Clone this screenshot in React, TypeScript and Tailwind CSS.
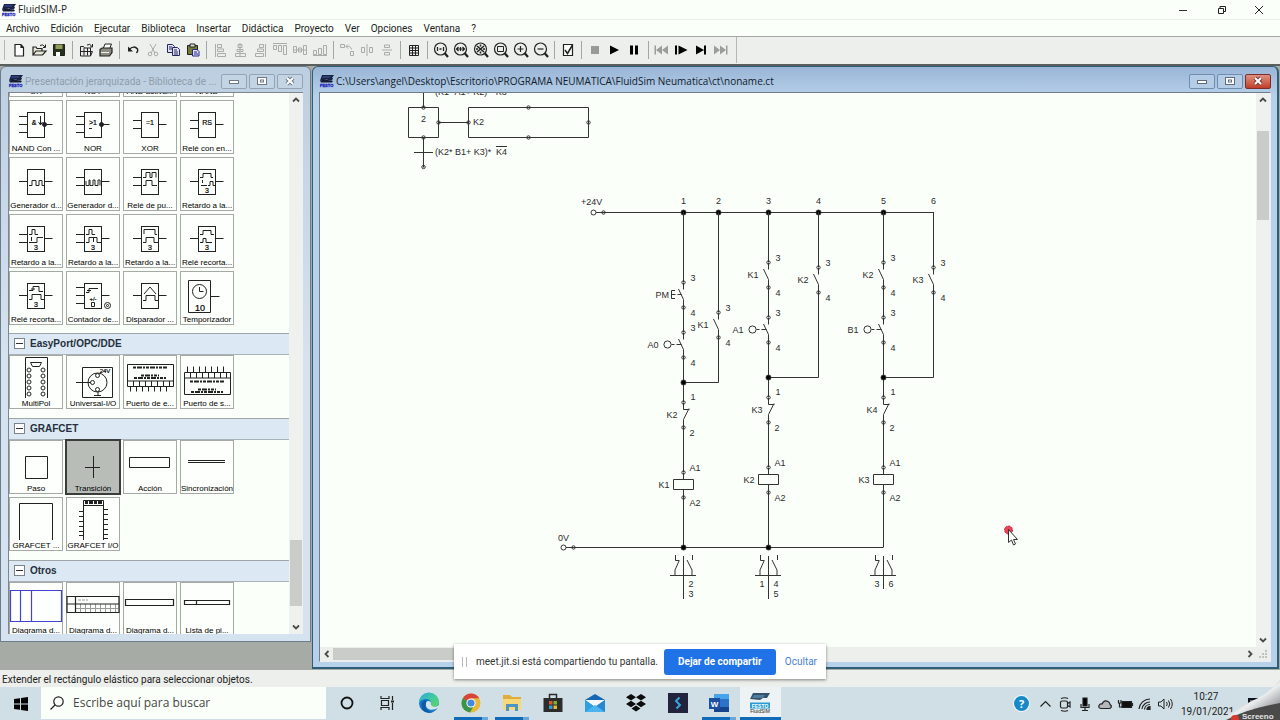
import type { ReactNode } from "react";

const ink = "#222";

/* ---------- shared pieces ---------- */

function FestoIcon() {
  return (
    <svg width="16" height="16" viewBox="0 0 16 16" className="shrink-0" aria-hidden="true">
      <path d="M3 2h12l-2 3h1l-1 2.500H10l-2-1-7 1z" fill="#1c2340" />
      <path d="M4 3h8l-2 2H3z" fill="#2c3f7c" />
      <path d="M1 7.500l5-1 8 1.500-1 1.500H2z" fill="#161c36" />
      <text x="1" y="14" fontSize="4" fontWeight="bold" fill="#2424b8" stroke="#2424b8" strokeWidth=".3" fontFamily="Liberation Sans, sans-serif">FESTO</text>
    </svg>
  );
}

function Ico({ children, color = ink }: { children: ReactNode; color?: string }) {
  return (
    <svg width="20" height="20" viewBox="0 0 20 20" fill="none" stroke={color} strokeWidth="1" aria-hidden="true">
      {children}
    </svg>
  );
}

/* ---------- toolbar ---------- */

const dim = "#a9ada8";
const Mag = ({ children }: { children: ReactNode }) => (
  <Ico>
    <circle cx="9.500" cy="9" r="6" strokeWidth="1.200" />
    <path d="M13.500 13l3.500 4" strokeWidth="2.200" />
    {children}
  </Ico>
);

const toolGroups: { label: string; icon: ReactNode }[][] = [
  [
    { label: "Nuevo", icon: <Ico><path d="M6 4.500h6l2.500 3v8.500H6zM12 4.500v3h2.500" fill="#fff" strokeWidth="1.200" /></Ico> },
    { label: "Abrir", icon: <Ico><path d="M4 15V7h3l1 1.500h5V11M4 15l3-4h10l-3.500 4z" fill="#e8e8d8" strokeWidth="1.200" /><path d="M11 5.500q3-2 5 1.500M16.500 4.500V7.500H14" /></Ico> },
    { label: "Guardar", icon: <Ico><path d="M4.500 4.500h11v11h-11z" fill="#26301c" stroke="#1c2414" /><path d="M6.500 4.500h7V9h-7z" fill="#8f9c5a" stroke="none" /><path d="M7 12h4v4H7z" fill="#fff" stroke="none" /></Ico> },
  ],
  [
    { label: "Abrir biblioteca", icon: <Ico><path d="M4.500 6.500h3l1 1.500h6v8h-10z" fill="#eee" /><path d="M8 8v7.500M11.500 8v7.500M4.500 11.500h12l-2 4.500M11 5q3-2 5 1.500M16.500 4V7H14" /></Ico> },
    { label: "Imprimir", icon: <Ico><path d="M7 9l2-5h6.500l-2 5" fill="#fff" /><path d="M4 9.500L6 8h10v4.500L13.500 16H4z" fill="#8c8c80" strokeWidth="1.200" /><path d="M5 12.500h8" stroke="#eee" /></Ico> },
  ],
  [
    { label: "Deshacer", icon: <Ico><path d="M6 9.500q5-4.500 8.500-.5 1 2-1 4" strokeWidth="1.500" /><path d="M5 6.500v5h5z" fill={ink} stroke="none" /></Ico> },
    { label: "Cortar", icon: <Ico color={dim}><path d="M7 4l5 9M13 4l-5 9" /><circle cx="7" cy="14" r="1.800" /><circle cx="13" cy="14" r="1.800" /></Ico> },
    { label: "Copiar", icon: <Ico color="#26265c"><path d="M4.500 4.500h5l2 2v6h-7z" fill="#dfe2f4" /><path d="M9.500 7.500h5l2 2v6h-7z" fill="#dfe2f4" /><path d="M6 7h3M6 9h3M11 10h3M11 12h4M11 14h4" /></Ico> },
    { label: "Pegar", icon: <Ico><path d="M4.500 5.500h10v9h-10z" fill="#767a38" /><path d="M7 4h5v3H7z" fill="#ddd" /><path d="M9.500 9.500h4.500l2 2v4.500H9.500z" fill="#dfe2f4" stroke="#26268c" /><path d="M11 12h3M11 14h4" stroke="#26268c" /></Ico> },
  ],
  [
    { label: "Alinear izquierda", icon: <Ico color={dim}><path d="M5.500 4v13M7.500 4.500h4v3h-4zM7.500 9h6v2.500h-6zM7.500 13.500h8v3h-8z" /></Ico> },
    { label: "Centrar horizontal", icon: <Ico color={dim}><path d="M8 4.500h4v3H8zM7 9.500h6v2H7zM5.500 13.500h10v3h-10zM10 3v14" /></Ico> },
    { label: "Alinear derecha", icon: <Ico color={dim}><path d="M15.500 4v13M9.500 4.500h4v3h-4zM7.500 9h6v2.500h-6zM5.500 13.500h8v3h-8z" /></Ico> },
    { label: "Alinear arriba", icon: <Ico color={dim}><path d="M3 3.500h14M3.500 5.500h3v4h-3zM8.500 5.500h3v6h-3zM13.500 5.500h3v9h-3z" /></Ico> },
    { label: "Centrar vertical", icon: <Ico color={dim}><path d="M3.500 6.500h3v6h-3zM8.500 8h3v4h-3zM13.500 5.500h3v9h-3zM3 10h14" /></Ico> },
    { label: "Alinear abajo", icon: <Ico color={dim}><path d="M3 15.500h14M3.500 10.500h3v4h-3zM8.500 8.500h3v6h-3zM13.500 5.500h3v9h-3z" /></Ico> },
  ],
  [
    { label: "Girar", icon: <Ico color={dim}><path d="M3.500 4.500h4v3h-4zM13.500 11.500h3v4h-3zM9 6.500q5-1 5.500 3M11 4.500l-2 2 2 2" /></Ico> },
    { label: "Reflejar horizontal", icon: <Ico color={dim}><path d="M10 4v12M4.500 7.500h3v5h-3zM12.500 7.500h3v5h-3z" /></Ico> },
    { label: "Reflejar vertical", icon: <Ico color={dim}><path d="M5 10h10M7.500 5h5v2.500h-5zM7.500 12.500h5V15h-5z" /></Ico> },
  ],
  [{ label: "Retícula", icon: <Ico><path d="M5.500 5.500h9v10h-9zM5.500 8h9M5.500 10.500h9M5.500 13h9M8.500 5.500v10M11.500 5.500v10" /></Ico> }],
  [
    { label: "Tamaño original", icon: <Mag><path d="M6.500 7v4M12.500 7v4M8.500 9h2" strokeWidth="1.300" /></Mag> },
    { label: "Zoom anterior", icon: <Mag><path d="M5 9h9M7.500 7l-2 2 2 2M11.500 7l2 2-2 2M9.500 7v4" strokeWidth="1.200" /></Mag> },
    { label: "Ver todo", icon: <Mag><path d="M6 6l7 6M13 6l-7 6M5 9h2M12 9h2M9.500 4.500v2M9.500 11.500v2" strokeWidth="1.600" /></Mag> },
    { label: "Ver sección", icon: <Mag><path d="M6.500 6.500h6v5h-6z" /></Mag> },
    { label: "Acercar", icon: <Mag><path d="M6.500 9h6M9.500 6v6" strokeWidth="1.200" /></Mag> },
    { label: "Alejar", icon: <Mag><path d="M6.500 9h6" strokeWidth="1.200" /></Mag> },
  ],
  [{ label: "Verificar", icon: <Ico><path d="M5.500 4.500h9v11h-9z" fill="#fff" strokeWidth="1.200" /><path d="M7 10l2.500 3.500 5-8.500" strokeWidth="1.500" /></Ico> }],
  [
    { label: "Parar", icon: <Ico color="none"><path d="M6 6h8v8H6z" fill="#979b96" /></Ico> },
    { label: "Iniciar", icon: <Ico color="none"><path d="M5 5.500v9l9-4.500z" fill="#000" /></Ico> },
    { label: "Pausa", icon: <Ico color="none"><path d="M5 5.500h3v9H5zM10 5.500h3v9h-3z" fill="#000" /></Ico> },
  ],
  [
    { label: "Reiniciar", icon: <Ico color="none"><path d="M2.500 5.500H4v9H2.500zM10 5.500v9L4 10zM16 5.500v9L10 10z" fill="#9a9e99" /></Ico> },
    { label: "Paso a paso", icon: <Ico color="none"><path d="M3 5.500h2v9H3zM6.500 5.500v9l9-4.500z" fill="#000" /></Ico> },
    { label: "Simular hasta cambio", icon: <Ico color="none"><path d="M4 5.500v9l8-4.500zM12 5.500h2v9h-2z" fill="#000" /></Ico> },
    { label: "Tema siguiente", icon: <Ico color="none"><path d="M2 5.500v9L8 10zM8 5.500v9l6-4.500zM14 5.500h1.500v9H14z" fill="#9a9e99" /></Ico> },
  ],
];

function Toolbar() {
  return (
    <div className="flex h-7 shrink-0 items-center border-t border-[#a3a7a2] bg-[#ecefeb] pb-px pl-1">
      <span className="h-5 w-[5px] border-l border-[#b4b8b3]" />
      {toolGroups.map((group, g) => (
        <div key={g} className="flex items-center">
          {group.map((t) => (
            <button key={t.label} aria-label={t.label} className="flex size-5 items-center justify-center">
              {t.icon}
            </button>
          ))}
          {g < toolGroups.length - 1 ? <span className="mx-[3px] h-[18px] w-px bg-[#a3a7a2]" /> : <span className="ml-1 h-[26px] w-px bg-[#b4b8b3]" />}
        </div>
      ))}
    </div>
  );
}

/* ---------- component library ---------- */

function Gate({ left, right = [24], children }: { left: number[]; right?: number[]; children?: ReactNode }) {
  return (
    <>
      <rect x="18.500" y="12.500" width="17" height="25" />
      {left.map((y) => <path key={y} d={`M10 ${y + 0.5}h8.500`} />)}
      {right.map((y) => <path key={y} d={`M35.500 ${y + 0.5}h8`} />)}
      {children}
    </>
  );
}

function T({ x, y, s = 7, children }: { x: number; y: number; s?: number; children: ReactNode }) {
  return <text x={x} y={y} fontSize={s} textAnchor="middle" fill="#000" stroke="#000" strokeWidth=".2">{children}</text>;
}

type Item = { name: string; art: ReactNode; selected?: boolean };

const Block = () => <Gate left={[16, 32]} />;
const logic: Item[] = [
  { name: "OR", art: <Block /> },
  { name: "NOT", art: <Block /> },
  { name: "AND activa...", art: <Block /> },
  { name: "NAND", art: <Block /> },
  { name: "NAND Con ...", art: <Gate left={[16, 24, 32]}><T x={25} y={25}>&amp;</T><path d="M31.500 16v9M29.500 22l2 3 2-3" /><circle cx="35.500" cy="24.500" r="2" fill={ink} /></Gate> },
  { name: "NOR", art: <Gate left={[16, 24, 32]}><T x={27} y={25}>&gt;1</T><path d="M23 28.500h3" /><circle cx="35.500" cy="24.500" r="2" fill={ink} /></Gate> },
  { name: "XOR", art: <Gate left={[20, 28]}><T x={27} y={25}>=1</T></Gate> },
  { name: "Relé con en...", art: <Gate left={[20, 28]}><T x={27} y={25}>RS</T></Gate> },
  { name: "Generador d...", art: <Gate left={[24]}><path d="M20 28.500h3v-5h4v5h3v-5h3v5h2" /></Gate> },
  { name: "Generador d...", art: <Gate left={[20, 28]}><path d="M20 24v4.500h3V23h1v5.500h3V23h2v5.500h3V23h2v5.500" /></Gate> },
  { name: "Relé de pu...", art: <Gate left={[20, 28]}><path d="M20 20.500h3v-5h4v5h2v-5h4v5M20 28.500h3v-5h6v5h5" /></Gate> },
  { name: "Retardo a la...", art: <Gate left={[24]}><path d="M20 20.500h3v-4h8v4h2M22.500 23v3M21 28.500h6M28 28.500h2v-4h3v4h2" /><T x={27} y={36}>3</T></Gate> },
  { name: "Retardo a la...", art: <Gate left={[20, 28]}><path d="M20 20.500h3v-5h3v5h3M22.500 23v4M20 28.500h8v-5h6" /><T x={27} y={36}>3</T></Gate> },
  { name: "Retardo a la...", art: <Gate left={[20, 28]}><path d="M20 20.500h3v-5h3v5h3M20 28.500h3v-5h8v5h4M27.500 24v4" /><T x={27} y={36}>3</T></Gate> },
  { name: "Retardo a la...", art: <Gate left={[24]}><path d="M21 20v-4.500h11v5h2M20 28.500h3v-5h8v5h4" /><T x={27} y={36}>3</T></Gate> },
  { name: "Relé recorta...", art: <Gate left={[24]}><path d="M20 20.500h3v-4h8v4h3M20 28.500h3v-4h3v4h6" /><T x={27} y={36}>3</T></Gate> },
  { name: "Relé recorta...", art: <Gate left={[24]}><path d="M20 19.500h4v-4h6v5h4M20 28.500h3v-5h9v5h3M22 18h4" /><T x={27} y={36}>3</T></Gate> },
  { name: "Contador de...", art: <Gate left={[16, 24, 32]}><path d="M20 21.500h3v-4h9M21 19.500h4" /><T x={27} y={30} s={6}>+/-</T><path d="M25.500 31.500h3v4h-3z" /><circle cx="41.500" cy="34.500" r="3" /><circle cx="41.500" cy="34.500" r="1" /></Gate> },
  { name: "Disparador ...", art: <Gate left={[24]}><path d="M21 23l6-7 6 7M20 29.500h3v-5h9v5h3" /></Gate> },
  { name: "Temporizador", art: <><path d="M8.500 9.500h22v32h-22zM30.500 25.500h9" /><circle cx="19.500" cy="20.500" r="7" /><path d="M19.500 16v4.500h4" /><T x={20} y={40} s={9}>10</T></> },
];

const pinRows = [15, 21, 27, 33, 39];
const ports: Item[] = [
  { name: "MultiPol", art: <><path d="M16.500 43V2.500h22V43M21.500 7.500h11l-2 4h-7z" />{pinRows.map((y) => <g key={y}><circle cx="20" cy={y} r="2" /><circle cx="34" cy={y} r="2" /></g>)}</> },
  { name: "Universal-I/O", art: <><path d="M16.500 12.500h30v30h-30zM10 27.500h15M32 37v4M28 40.500h7" /><circle cx="31.500" cy="27.500" r="9.500" /><circle cx="26.500" cy="27.500" r="2" /><circle cx="31.500" cy="20.500" r="2" /><circle cx="31.500" cy="34.500" r="2" /><T x={39} y={18} s={6}>24V</T></> },
  { name: "Puerto de e...", art: <><path d="M4.500 9.500h46v22h-46zM4.500 26h46M7.500 31.500v5M13.500 31.500v5M19.500 31.500v5M25.500 31.500v5M31.500 31.500v5M37.500 31.500v5M43.500 31.500v5M10.500 26v5M16.500 26v5M22.500 26v5M28.500 26v5M34.500 26v5M40.500 26v5M46.500 26v5" /><path d="M10 12.500h34M18 20.500h18M11 23h32" strokeWidth="1.800" strokeDasharray="3 1 5 1 2 1" /></> },
  { name: "Puerto de s...", art: <><path d="M4.500 17.500h46v22h-46zM4.500 23h46M7.500 17.500v-6M13.500 17.500v-6M19.500 17.500v-6M25.500 17.500v-6M31.500 17.500v-6M37.500 17.500v-6M43.500 17.500v-6M10.500 18v5M16.500 18v5M22.500 18v5M28.500 18v5M34.500 18v5M40.500 18v5M46.500 18v5" /><path d="M10 26.500h34M18 34.500h18M11 37h32" strokeWidth="1.800" strokeDasharray="3 1 5 1 2 1" /></> },
];

const grafcet: Item[] = [
  { name: "Paso", art: <path d="M16.500 16.500h22v22h-22z" /> },
  { name: "Transición", selected: true, art: <path d="M27.500 16v22M19 27.500h15" /> },
  { name: "Acción", art: <path d="M6.500 17.500h40v10h-40z" /> },
  { name: "Sincronización", art: <path d="M8 20.500h37M8 22.500h37" /> },
  { name: "GRAFCET ...", art: <path d="M10.500 43V6.500h33V43" /> },
  { name: "GRAFCET I/O", art: <><path d="M17.500 43V3.500h20V43M17.500 8.500h20M13 14.500h4M13 19.500h4M13 24.500h4M13 29.500h4M13 34.500h4M13 38.500h4M37 12.500h5M37 17.500h5M37 22.500h5M37 27.500h5M37 32.500h5M37 37.500h5M37 41.500h5" /><path d="M19 5.500h17" strokeWidth="3" strokeDasharray="3 1 4 1" /></> },
];

const others: Item[] = [
  { name: "Diagrama d...", art: <path d="M1.500 8.500h51v31h-51zM11.500 8.500v31M22.500 8.500v31" stroke="#4343d0" strokeWidth="1.200" /> },
  { name: "Diagrama d...", art: <><path d="M9 26.500h43M14.500 22v8M19.500 22v8M24.500 22v8M29.500 22v8M34.500 22v8M39.500 22v8M44.500 22v8M49.500 22v8" stroke="#9a9a9a" /><path d="M1 14.500h52v16H1zM1 22h52M9.500 14.500v16" strokeWidth="1.200" /><path d="M12 18h10" stroke="#999" strokeDasharray="3 1" /></> },
  { name: "Diagrama d...", art: <path d="M2.500 17.500h48v6h-48z" strokeWidth="1.200" /> },
  { name: "Lista de pi...", art: <path d="M4.500 18.500h45v4h-45zM16.500 18.500v4" strokeWidth="1.200" /> },
];

function Tiles({ items }: { items: Item[] }) {
  return (
    <div className="grid grid-cols-[repeat(4,54px)] gap-[3px]">
      {items.map((it, i) => (
        <button
          key={i}
          className={
            it.selected
              ? "relative h-[54px] border border-[#3b3d3a] bg-[#b9bdb8] outline outline-[#3b3d3a]"
              : "relative h-[54px] border border-[#a6aaa5] bg-[#fcfffb]"
          }
        >
          <svg viewBox="0 0 54 54" className="absolute -inset-px size-[54px]" fill="none" stroke={ink} fontFamily="Liberation Sans, sans-serif" aria-hidden="true">
            {it.art}
          </svg>
          <span className="absolute inset-x-0 bottom-0 text-center font-['Liberation_Sans',sans-serif] text-[8px] leading-[9px] whitespace-nowrap text-black">
            {it.name}
          </span>
        </button>
      ))}
    </div>
  );
}

function SectionHeader({ title }: { title: string }) {
  return (
    <button className="flex h-[22px] w-full items-center gap-[5px] border-y border-t-[#a0a6a8] border-b-[#a9b2b8] bg-[#dce9f4] pb-px pl-[5px]">
      <span className="flex size-[11px] items-center justify-center border border-[#7b8288] bg-white">
        <span className="h-px w-[7px] bg-[#333]" />
      </span>
      <span className="font-['Liberation_Sans',sans-serif] text-[10px] leading-3 font-bold text-[#26303c]">{title}</span>
    </button>
  );
}

/* ---------- window chrome ---------- */

function Chevron({ d }: { d: string }) {
  return (
    <svg width="8" height="8" viewBox="0 0 8 8" fill="none" stroke="#4a4c4a" strokeWidth="1.800" aria-hidden="true">
      <path d={d} />
    </svg>
  );
}
const up = "M1 5.500l3-3 3 3";
const down = "M1 2.500l3 3 3-3";
const leftward = "M5.500 1l-3 3 3 3";
const rightward = "M2.500 1l3 3-3 3";

function ChildTitle({ title, active }: { title: string; active?: boolean }) {
  const base = "flex h-[15px] w-[26px] items-center justify-center rounded-[2px] border";
  const tone = active ? "border-[#6f8db0] bg-[#b4cce6]" : "border-[#93a4b6] bg-[#c3d4e4]";
  const glyph = active ? "#5d6b7c" : "#707a85";
  return (
    <div className="flex h-[25px] shrink-0 items-center gap-px pt-[3px]">
      <FestoIcon />
      <h2
        className={
          active
            ? "min-w-0 flex-1 truncate text-[10px] text-[#111c2c]"
            : "min-w-0 flex-1 truncate font-[Roboto,sans-serif] text-[10px] text-[#8f9dac]"
        }
      >
        {title}
      </h2>
      <div className="flex gap-[2px]">
        <button aria-label="Minimizar" className={`${base} ${tone}`}>
          <svg width="12" height="10" viewBox="0 0 12 10"><rect x="1.500" y="4.500" width="9" height="3" fill="#fff" stroke={glyph} /></svg>
        </button>
        <button aria-label="Maximizar" className={`${base} ${tone}`}>
          <svg width="12" height="10" viewBox="0 0 12 10"><rect x="1.500" y="1.500" width="9" height="7" fill="#fff" stroke={glyph} /><rect x="4.500" y="4" width="3" height="2" fill="#fff" stroke={glyph} /></svg>
        </button>
        <button aria-label="Cerrar" className={`${base} ${active ? "border-[#7c2f28] bg-linear-to-b from-[#dd9082] to-[#c03d28]" : tone}`}>
          <svg width="12" height="10" viewBox="0 0 12 10"><path d="M3 2l6 6M9 2L3 8" stroke={active ? "#7b3a34" : glyph} strokeWidth="4" /><path d="M3 2l6 6M9 2L3 8" stroke="#fff" strokeWidth="2" /></svg>
        </button>
      </div>
    </div>
  );
}

/* ---------- circuit drawing ---------- */

const Pin = ({ x, y }: { x: number; y: number }) => <circle cx={x} cy={y} r="1.700" />;
const Dot = ({ x, y }: { x: number; y: number }) => <circle cx={x} cy={y} r="2.500" fill="#000" />;
const L = ({ x, y, children }: { x: number; y: number; children: ReactNode }) => (
  <text x={x} y={y} fill="#2b2b2b" stroke="none">{children}</text>
);

function Contact({ x, y, name, kind = "relay" }: { x: number; y: number; name: string; kind?: "relay" | "push" | "roller" }) {
  const my = y + 12;
  return (
    <g>
      <Pin x={x} y={y} />
      <Pin x={x} y={y + 25} />
      <path d={`M${x} ${y}v7M${x - 5} ${y + 6.5}l5 10.500v8`} />
      {kind === "push" && <path d={`M${x - 8.5} ${my - 4}h-3.500v8h3.500M${x - 12} ${my}h4M${x - 6} ${my}h4`} />}
      {kind === "roller" && <><circle cx={x - 16} cy={my} r="3.600" /><path d={`M${x - 12} ${my}h3M${x - 7} ${my}h5`} /></>}
      <L x={x + 7} y={y - 2}>3</L>
      <L x={x + 7} y={y + 33}>4</L>
      <L x={kind === "push" ? x - 28 : kind === "roller" ? x - 36 : x - 21} y={y + 15}>{name}</L>
    </g>
  );
}

function Break({ x, y, name }: { x: number; y: number; name: string }) {
  return (
    <g>
      <Pin x={x} y={y} />
      <Pin x={x} y={y + 25} />
      <path d={`M${x} ${y}v7h6M${x + 5.5} ${y + 6}l-5.500 11v8`} />
      <L x={x + 7} y={y - 3}>1</L>
      <L x={x + 6} y={y + 33}>2</L>
      <L x={x - 17} y={y + 15}>{name}</L>
    </g>
  );
}

function Coil({ x, y, name }: { x: number; y: number; name: string }) {
  return (
    <g>
      <Pin x={x} y={y} />
      <Pin x={x} y={y + 25} />
      <path d={`M${x} ${y}v7M${x - 10} ${y + 7}h20v10h-20zM${x} ${y + 17}v8`} />
      <L x={x + 6} y={y - 2}>A1</L>
      <L x={x + 6} y={y + 33}>A2</L>
      <L x={x - 25} y={y + 15}>{name}</L>
    </g>
  );
}

function ContactTable({ x, end, left, right }: { x: number; end: number; left?: string; right: string[] }) {
  return (
    <g>
      <path d={`M${x} 556V${end}M${x - 13.5} 575.500h26M${x - 8} 555v5.500h4M${x - 4.5} 561l-4 9v5M${x + 9} 555v5M${x + 3.5} 560l5 10v5`} />
      {left && <L x={x - 9} y={587}>{left}</L>}
      {right.map((r, i) => <L key={r} x={x + 5} y={587 + i * 10}>{r}</L>)}
    </g>
  );
}

function Circuit() {
  return (
    <svg width="936" height="555" viewBox="320 93 936 555" className="block shrink-0" fill="none" stroke="#333" fontFamily="Liberation Sans, sans-serif" fontSize="9">
      <L x={435} y={95}>(K1* A1+ K2)*&nbsp; K3</L>
      <path d="M423.500 93v14M408.500 107.500h30v30h-30zM438.500 122.500h30M468.500 107.500h120v30h-120zM423.500 137.500v30M414 152.500h19M496 146.500h11" />
      <Pin x={423.5} y={107.5} /><Pin x={438.5} y={122.5} /><Pin x={423.5} y={137.5} /><Pin x={423.5} y={167} />
      <Pin x={468.5} y={122.5} /><Pin x={528.5} y={107.5} /><Pin x={528.5} y={137.5} /><Pin x={588.5} y={122.5} />
      <L x={421} y={122}>2</L>
      <L x={473} y={125}>K2</L>
      <L x={435} y={155}>(K2* B1+ K3)*</L>
      <L x={496} y={155}>K4</L>

      <L x={581} y={205}>+24V</L>
      <circle cx="593.500" cy="212.500" r="2.500" /><Pin x={603.5} y={212.5} />
      <path d="M596 212.500H933.500" />
      {[683, 718, 768, 818, 883, 933].map((x, i) => <L key={x} x={x - 2} y={204}>{i + 1}</L>)}
      {[683.5, 718.5, 768.5, 818.5, 883.5].map((x) => <Dot key={x} x={x} y={212.5} />)}

      <path d="M683.500 212v70M683.500 307v25M683.500 357v45M683.500 427v45M683.500 497v50M718.500 212v100M718.500 337v45.500h-35" />
      <Contact x={683.5} y={282.5} name="PM" kind="push" />
      <Contact x={683.5} y={332.5} name="A0" kind="roller" />
      <Contact x={718.5} y={312.5} name="K1" />
      <Dot x={683.5} y={382.5} />
      <Break x={683.5} y={402.5} name="K2" />
      <Coil x={683.5} y={472.5} name="K1" />

      <path d="M768.500 212v50M768.500 287v30M768.500 342v55M768.500 422v45M768.500 492v55M818.500 212v55M818.500 292v85.500h-50" />
      <Contact x={768.5} y={262.5} name="K1" />
      <Contact x={768.5} y={317.5} name="A1" kind="roller" />
      <Contact x={818.5} y={267.5} name="K2" />
      <Dot x={768.5} y={377.5} />
      <Break x={768.5} y={397.5} name="K3" />
      <Coil x={768.5} y={467.5} name="K2" />

      <path d="M883.500 212v50M883.500 287v30M883.500 342v55M883.500 422v45M883.500 492v55M933.500 212v55M933.500 292v85.500h-50" />
      <Contact x={883.5} y={262.5} name="K2" />
      <Contact x={883.5} y={317.5} name="B1" kind="roller" />
      <Contact x={933.5} y={267.5} name="K3" />
      <Dot x={883.5} y={377.5} />
      <Break x={883.5} y={397.5} name="K4" />
      <Coil x={883.5} y={467.5} name="K3" />

      <L x={558} y={541}>0V</L>
      <circle cx="563.500" cy="547.500" r="2.500" /><Pin x={573.5} y={547.5} />
      <path d="M566 547.500H883.500" />
      <Dot x={683.5} y={547.5} /><Dot x={768.5} y={547.5} />
      <ContactTable x={683.5} end={599} right={["2", "3"]} />
      <ContactTable x={768.5} end={599} left="1" right={["4", "5"]} />
      <ContactTable x={883.5} end={589} left="3" right={["6"]} />

      <circle cx="1008.500" cy="530" r="4" fill="#e8425a" stroke="#d22a48" strokeDasharray="2 1" />
      <path d="M1008.500 529.500v13l3-2.500 2 5 2-1-2-4.500h4z" fill="#fff" stroke="#333" />
    </svg>
  );
}

/* ---------- taskbar ---------- */

type App = { name: string; icon: ReactNode; state?: "open" | "active" };
const Svg = ({ children }: { children: ReactNode }) => (
  <svg width="22" height="22" viewBox="0 0 22 22" fill="none" aria-hidden="true">{children}</svg>
);

const apps: App[] = [
  { name: "Cortana", icon: <Svg><circle cx="11" cy="11" r="5.500" stroke="#111" strokeWidth="1.800" /></Svg> },
  { name: "Vista de tareas", icon: <Svg><path d="M4 4v2.500h8V4M4 18v-2.500h8V18M4.500 8.500h7v5h-7zM15.500 4v4M15.500 11v7" stroke="#222" strokeWidth="1.200" /><path d="M14 8.500h3v2h-3z" fill="#222" /></Svg> },
  { name: "Edge", icon: <Svg><defs><linearGradient id="edge" x1="0" y1="0" x2="1" y2="1"><stop offset="0" stopColor="#2aa6dc" /><stop offset=".5" stopColor="#42c9a2" /><stop offset="1" stopColor="#62d660" /></linearGradient></defs><circle cx="11" cy="11" r="10" fill="#1678c8" /><path d="M1 11a10 10 0 0 1 20-1c0 4-3 5-6 5-2 0-3-1-2-3 1-3-2-5-5-5s-6 1-7 4z" fill="url(#edge)" /><path d="M8 11c-1 6 4 8 10 6l3-2v-2c-3 3-9 2-8-2 0-2-4-3-5 0z" fill="#d3e4eb" /><path d="M8 11c-2 5 2 9 7 9.500q-8 1.500-11-4Q2 9 8 8z" fill="#105aa4" /></Svg> },
  { name: "Chrome", state: "open", icon: <Svg><circle cx="11" cy="11" r="9.500" fill="#e8b93a" /><path d="M11 11L2.800 6.200A9.500 9.500 0 0 1 19.200 6.200H11z" fill="#d8443a" /><path d="M11 11L2.800 6.200A9.500 9.500 0 0 0 10 20.500l4-7z" fill="#37964c" /><circle cx="11" cy="11" r="4.600" fill="#fff" /><circle cx="11" cy="11" r="3.600" fill="#4688dc" /></Svg> },
  { name: "Explorador", state: "open", icon: <Svg><path d="M2 3h7l2 2h9v13H2z" fill="#e0ac3c" /><path d="M2 7h18v11H2z" fill="#f8d977" /><path d="M5 12h12v7h-3v-4H8v4H5z" fill="#4e94c4" /></Svg> },
  { name: "Store", icon: <Svg><path d="M7.500 6V2.500h7V6" stroke="#2c2c2c" strokeWidth="1.500" /><path d="M1.500 6h19v14h-19z" fill="#2c2c2c" /><path d="M7 9h3.500v3.500H7z" fill="#e0532c" /><path d="M11.500 9H15v3.500h-3.500z" fill="#79b530" /><path d="M7 13.500h3.500V17H7z" fill="#2b9cda" /><path d="M11.500 13.500H15V17h-3.500z" fill="#f0b826" /></Svg> },
  { name: "Correo", icon: <Svg><path d="M1 8l10-6 10 6v12H1z" fill="#1467b4" /><path d="M1 8h20L11 15z" fill="#f4f8fb" /><path d="M1 8l10 7-10 5z" fill="#2f9fe0" /><path d="M21 8l-10 7 10 5z" fill="#2588d0" /><path d="M1 20l10-7 10 7z" fill="#4bb4f0" /></Svg> },
  { name: "Dropbox", icon: <Svg><path d="M6 2l5 3.200-5 3.200L1 5.200zM16 2l5 3.200-5 3.200-5-3.200zM6 8.800l5 3.200-5 3.200L1 12zM16 8.800l5 3.200-5 3.200-5-3.200zM11 13.500l4.500 3-4.500 3-4.500-3z" fill="#0c0c0c" /></Svg> },
  { name: "Editor", icon: <Svg><path d="M1 1h20v20H1z" fill="#22233c" /><path d="M12.500 5.500L9 9l4 4-3.500 3.500" stroke="#3aa4dc" strokeWidth="2" /></Svg> },
  { name: "Word", state: "open", icon: <Svg><path d="M6 2h15v18H6z" fill="#2c72c8" /><path d="M6 2h15v5H6z" fill="#49a3ea" /><path d="M6 15h15v5H6z" fill="#17428c" /><path d="M1 6h11v11H1z" fill="#1b4f9f" /><text x="6.500" y="14.500" fontSize="8" fontWeight="bold" fill="#fff" textAnchor="middle" fontFamily="Liberation Sans, sans-serif">W</text></Svg> },
  { name: "FluidSIM", state: "active", icon: <Svg><path d="M4 1h17l-3 5h-4l-3 2-10-1z" fill="#34536c" /><path d="M5 3h11l-2 3H3z" fill="#4f7c9c" /><path d="M1 10.500h20v6H1z" fill="#2a9bd4" /><text x="11" y="15.500" fontSize="5" fontWeight="bold" fill="#fff" textAnchor="middle" fontFamily="Liberation Sans, sans-serif">FESTO</text><text x="11" y="21" fontSize="5" fill="#222" textAnchor="middle" fontFamily="Liberation Sans, sans-serif">FluidSIM</text></Svg> },
];

const Tray = ({ children }: { children: ReactNode }) => (
  <svg width="20" height="20" viewBox="0 0 20 20" fill="none" stroke="#222" strokeWidth="1.200" aria-hidden="true">{children}</svg>
);

function Taskbar() {
  return (
    <footer className="relative flex h-[33px] shrink-0 items-stretch overflow-hidden bg-[#d0dfe5]">
      <button aria-label="Inicio" className="flex w-[41px] items-center justify-center">
        <svg width="14" height="14" viewBox="0 0 14 14" fill="#000"><path d="M0 2l6-.8v5.300H0zM7 1l7-1v6.500H7zM0 7.500h6v5.300L0 12zM7 7.500h7V14l-7-1z" /></svg>
      </button>
      <label className="mb-px flex w-[285px] items-center gap-[9px] bg-[#fbfffa] pl-[9px]">
        <svg width="14" height="14" viewBox="0 0 14 14" fill="none" stroke="#222" strokeWidth="1.200"><circle cx="8.500" cy="5.500" r="4.700" /><path d="M5 9L.5 13.500" /></svg>
        <input type="text" aria-label="Buscar" placeholder="Escribe aquí para buscar" className="min-w-0 flex-1 bg-transparent text-xs outline-none placeholder:text-[#454745]" />
      </label>
      <nav className="flex w-[455px]">
        {apps.map((a) => (
          <button key={a.name} aria-label={a.name} className={a.state === "active" ? "flex flex-1 flex-col items-center justify-between bg-[#edf3f4] pt-[5px]" : "flex flex-1 flex-col items-center justify-between pt-[5px]"}>
            {a.icon}
            {a.state === "open" && <span className="h-[3px] w-[34px] border-r-[6px] border-[#6ba6d8] bg-[#0f6cbb]" />}
            {a.state === "active" && <span className="h-[3px] w-full bg-[#0f6cbb]" />}
          </button>
        ))}
      </nav>
      <div className="ml-auto flex items-center pr-[18px]">
        <span className="mr-[6px] flex size-[15px] items-center justify-center rounded-full bg-[#1788c8] text-[11px] leading-none font-bold text-white ring-1 ring-[#f2f8fa]">?</span>
        <Tray><path d="M5.500 12.500l5-5 5 5" /></Tray>
        <Tray><rect x="5.500" y="7" width="7" height="7" rx="1.500" /><path d="M12.500 9.500l2.500-1.500v5l-2.500-1.500M6 4.500q4-1.500 7 0M6 16.500q4 1.500 7 0" /></Tray>
        <Tray><path d="M8 4h4v8H8z" fill="#000" /><path d="M6 10v3.500h8V10M10 13.500V16M7 16.500h6" /></Tray>
        <Tray><path d="M6 14.500q-3-.5-2-3 1-2 3-1.500Q9 5.500 13 7.500q2 1 2 3 2 1 1 3-.5 1-2 1z" fill="#b4b8ba" /></Tray>
        <Tray><path d="M7 7.500h9.500v6H7z" fill="#111" /><path d="M17.500 9v3M3.500 6v3h2.500V6M4.500 9v4H7" /></Tray>
        <Tray><path d="M4 15A11 11 0 0 1 15 5M7 15a8 8 0 0 1 8-7M9.500 15.500a5.500 5.500 0 0 1 5.500-5" /><path d="M12 15.500a3 3 0 0 1 3-3v3z" fill="#222" /></Tray>
        <Tray><path d="M3.500 8h2.500l3-3v10l-3-3H3.500zM11.500 8q1.500 2 0 4M13.500 6.500q2.500 3.500 0 7M15.500 5q3.500 5 0 10" strokeWidth="1" /></Tray>
        <div className="ml-[6px] w-[50px] text-center font-[Roboto,sans-serif] text-[10px] leading-[15px] text-[#222]">
          <div>10:27</div>
          <div>19/01/2021</div>
        </div>
        <svg width="14" height="14" viewBox="0 0 14 14" className="ml-[17px]"><path d="M0 1h14v11H0z" fill="#10131c" /><path d="M2 4h10M2 6.500h10M2 9h6" stroke="#cdd6da" /></svg>
      </div>
    </footer>
  );
}

/* ---------- page ---------- */

const menus = ["Archivo", "Edición", "Ejecutar", "Biblioteca", "Insertar", "Didáctica", "Proyecto", "Ver", "Opciones", "Ventana", "?"];

export default function App() {
  return (
    <div className="relative flex h-screen min-h-[480px] flex-col overflow-hidden bg-[#fbfffa] font-['Open_Sans','Noto_Sans',sans-serif] text-[#222]">
      <header className="flex h-[19px] shrink-0 items-center gap-px pl-px">
        <FestoIcon />
        <h1 className="flex-1 text-[10px] text-[#222]">FluidSIM-P</h1>
        <div className="flex">
          <button aria-label="Minimizar" className="flex w-[39px] justify-center"><svg width="10" height="10" viewBox="0 0 10 10" stroke="#333"><path d="M1 5.500h8" /></svg></button>
          <button aria-label="Restaurar" className="flex w-[39px] justify-center"><svg width="10" height="10" viewBox="0 0 10 10" fill="none" stroke="#222"><path d="M1.500 3.500h5v5h-5zM3 3V1.500h5.500v5H7" /></svg></button>
          <button aria-label="Cerrar" className="flex w-[39px] justify-center pr-1"><svg width="10" height="10" viewBox="0 0 10 10" stroke="#222"><path d="M1 1l8 8M9 1L1 9" /></svg></button>
        </div>
      </header>
      <nav className="flex h-[17px] shrink-0 items-center gap-[11px] border-t border-[#eceeeb] pl-[6px] font-[Roboto,sans-serif] text-[10px]">
        {menus.map((m) => <button key={m}>{m}</button>)}
      </nav>
      <Toolbar />

      <main className="flex min-h-0 flex-1 border-t-2 border-[#5a5e5c] bg-[#a7aba6]">
        <section className="mb-[28px] flex w-[311px] shrink-0 flex-col rounded-t-md border border-[#6d7b8a] bg-linear-to-b from-[#bccfe0] via-[#d5e2ef] to-[#d5e2ef] px-[7px] pb-[7px]">
          <ChildTitle title="Presentación jerarquizada - Biblioteca de ..." />
          <div className="flex min-h-0 flex-1 border-t border-l border-[#7d868e] bg-[#fbfffa]">
            <div className="min-w-0 flex-1 overflow-hidden">
              <div className="-mt-[50px] mb-2"><Tiles items={logic} /></div>
              <SectionHeader title="EasyPort/OPC/DDE" />
              <div className="mb-[9px]"><Tiles items={ports} /></div>
              <SectionHeader title="GRAFCET" />
              <div className="mb-[9px]"><Tiles items={grafcet} /></div>
              <SectionHeader title="Otros" />
              <Tiles items={others} />
            </div>
            <div className="flex w-[14px] flex-col items-center bg-[#eff1ee]">
              <div className="flex h-[14px] items-center"><Chevron d={up} /></div>
              <div className="flex-[434]" />
              <div className="w-3 flex-[66] bg-[#c9ccc8]" />
              <div className="flex-[14]" />
              <div className="flex h-[14px] items-center"><Chevron d={down} /></div>
            </div>
          </div>
        </section>

        <section className="mr-px mb-px ml-px flex min-w-0 flex-1 flex-col rounded-t-md border border-r-2 border-b-2 border-[#2f5f78] bg-linear-to-b from-[#9ab5d6] via-[#b7d1ea] via-5% to-[#b7d1ea] px-[6px] pb-[5px]">
          <ChildTitle active title="C:\Users\angel\Desktop\Escritorio\PROGRAMA NEUMATICA\FluidSim Neumatica\ct\noname.ct" />
          <div className="flex min-h-0 flex-1 flex-col border border-[#707c88] border-r-[#e8eef2] border-b-[#e8eef2] bg-[#fbfffa]">
            <div className="flex min-h-0 flex-1">
              <div className="min-w-0 flex-1 overflow-hidden"><Circuit /></div>
              <div className="flex w-[14px] flex-col items-center bg-[#eff1ee]">
                <div className="flex h-[14px] items-center"><Chevron d={up} /></div>
                <div className="flex-[24]" />
                <div className="w-3 flex-[89] bg-[#c9ccc8]" />
                <div className="flex-[413]" />
                <div className="flex h-[14px] items-center"><Chevron d={down} /></div>
              </div>
            </div>
            <div className="flex h-[14px] shrink-0 items-center bg-[#ecefeb]">
              <div className="flex w-[13px] justify-center"><Chevron d={leftward} /></div>
              <div className="h-3 flex-[370] bg-[#c9ccc8]" />
              <div className="flex-[540]" />
              <div className="flex w-[13px] justify-center"><Chevron d={rightward} /></div>
              <svg width="14" height="12" viewBox="0 0 14 12" fill="#bfc3be"><path d="M9 2h2v2H9zM6 5h2v2H6zM9 5h2v2H9zM3 8h2v2H3zM6 8h2v2H6zM9 8h2v2H9z" /></svg>
            </div>
          </div>
        </section>
      </main>

      <div className="flex h-[17px] shrink-0 items-end bg-[#ecefeb] pl-[2px] font-[Roboto,sans-serif] text-[10px] leading-[15px]">Extender el rectángulo elástico para seleccionar objetos.</div>
      <Taskbar />

      <div className="absolute bottom-[41px] left-1/2 flex h-[35px] w-[372px] -translate-x-1/2 items-center bg-white pr-[9px] pl-2 font-[Roboto,sans-serif] text-[10px] whitespace-nowrap shadow-[0_1px_3px_rgba(0,0,0,0.45)]">
        <span className="h-[10px] w-[5px] border-x border-[#b8bab8]" />
        <span className="ml-[9px] flex-1 text-[#333635]">meet.jit.si está compartiendo tu pantalla.</span>
        <button className="h-[26px] w-[112px] shrink-0 rounded-[3px] bg-[#1f73e6] font-bold text-white">Dejar de compartir</button>
        <button className="ml-[9px] shrink-0 text-[#4a7fd0]">Ocultar</button>
      </div>

      <svg width="64" height="42" viewBox="0 0 64 42" className="absolute right-0 bottom-0" aria-hidden="true">
        <defs>
          <linearGradient id="curl" x1="0" y1="0" x2="1" y2="1">
            <stop offset=".3" stopColor="#8c9092" />
            <stop offset=".55" stopColor="#eceeef" />
            <stop offset=".8" stopColor="#9a9ea0" />
          </linearGradient>
        </defs>
        <path d="M10 42Q34 30 64 24V42z" fill="#4a4a4a" />
        <path d="M64 2Q52 16 38 22 20 30 4 42 36 30 64 25z" fill="url(#curl)" />
        <circle cx="19" cy="41" r="4" fill="#d8382e" />
        <text x="26" y="41" fontSize="8" fontWeight="bold" fill="#e4e4e4" fontFamily="Liberation Sans, sans-serif">Screeno</text>
      </svg>
    </div>
  );
}
